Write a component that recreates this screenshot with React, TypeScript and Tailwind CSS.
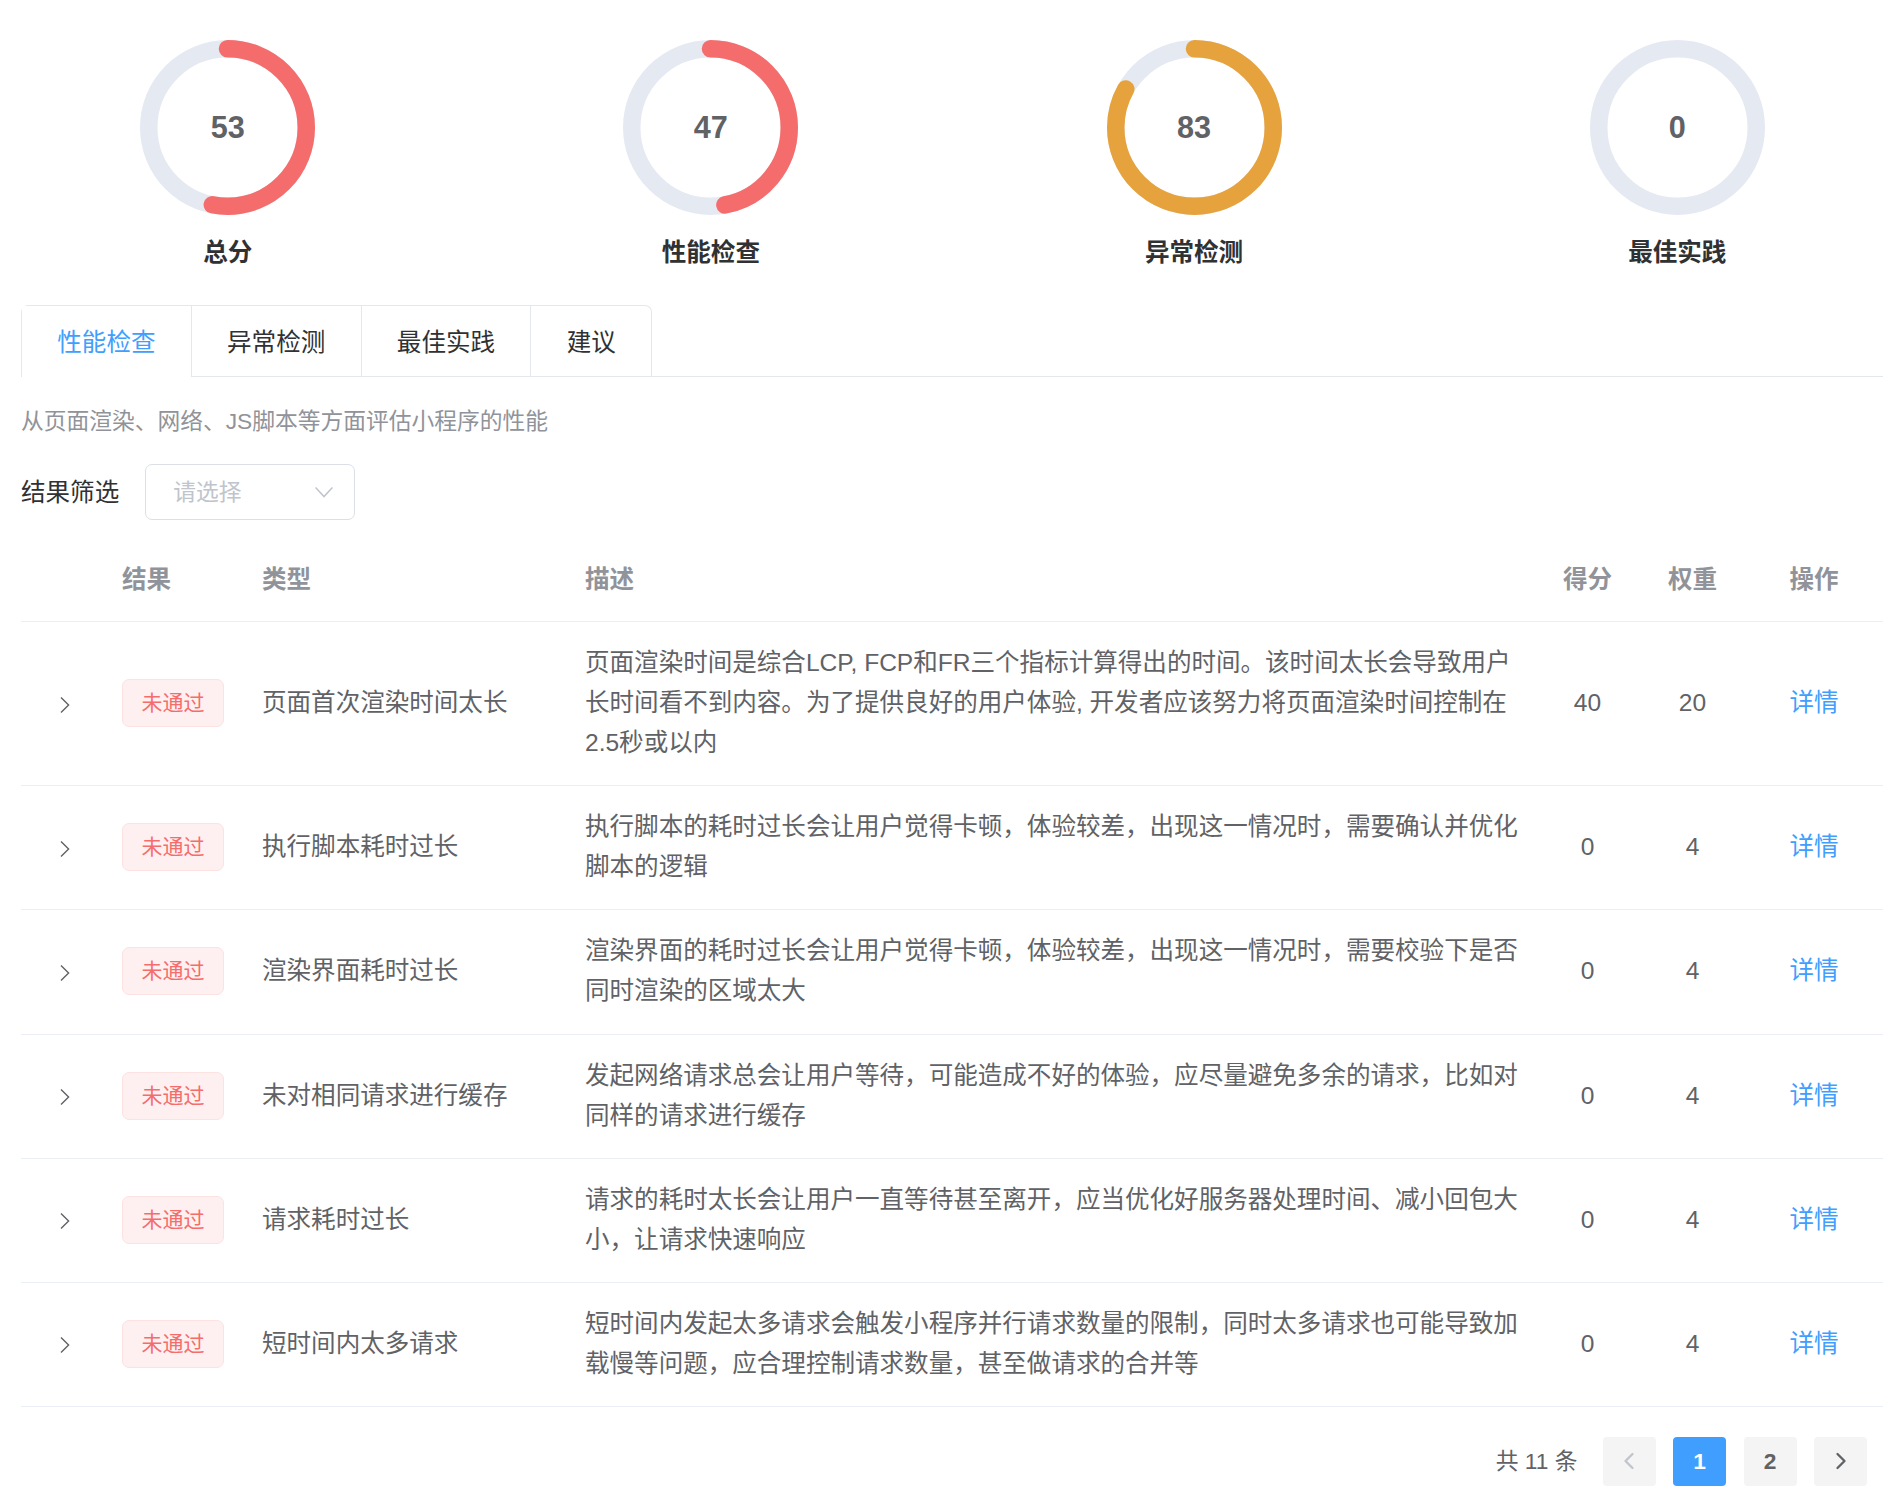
import { ChevronRight, ChevronLeft } from 'lucide-react';

const scores = [
  { label: '总分', value: 53, color: '#f56c6c' },
  { label: '性能检查', value: 47, color: '#f56c6c' },
  { label: '异常检测', value: 83, color: '#e6a23c' },
  { label: '最佳实践', value: 0, color: '#e5e9f2' },
];

const tabs = ['性能检查', '异常检测', '最佳实践', '建议'];

const rows = [
  {
    type: '页面首次渲染时间太长',
    desc: '页面渲染时间是综合LCP, FCP和FR三个指标计算得出的时间。该时间太长会导致用户长时间看不到内容。为了提供良好的用户体验, 开发者应该努力将页面渲染时间控制在2.5秒或以内',
    score: 40,
    weight: 20,
  },
  {
    type: '执行脚本耗时过长',
    desc: '执行脚本的耗时过长会让用户觉得卡顿，体验较差，出现这一情况时，需要确认并优化脚本的逻辑',
    score: 0,
    weight: 4,
  },
  {
    type: '渲染界面耗时过长',
    desc: '渲染界面的耗时过长会让用户觉得卡顿，体验较差，出现这一情况时，需要校验下是否同时渲染的区域太大',
    score: 0,
    weight: 4,
  },
  {
    type: '未对相同请求进行缓存',
    desc: '发起网络请求总会让用户等待，可能造成不好的体验，应尽量避免多余的请求，比如对同样的请求进行缓存',
    score: 0,
    weight: 4,
  },
  {
    type: '请求耗时过长',
    desc: '请求的耗时太长会让用户一直等待甚至离开，应当优化好服务器处理时间、减小回包大小，让请求快速响应',
    score: 0,
    weight: 4,
  },
  {
    type: '短时间内太多请求',
    desc: '短时间内发起太多请求会触发小程序并行请求数量的限制，同时太多请求也可能导致加载慢等问题，应合理控制请求数量，甚至做请求的合并等',
    score: 0,
    weight: 4,
  },
];

const gridCols = 'grid grid-cols-[83px_142px_323px_966px_105px_105px_138px] items-center';

function Ring({ value, color }: { value: number; color: string }) {
  const len = 2 * Math.PI * 45;
  const d = 'M50 5 a45 45 0 1 1 0 90 a45 45 0 1 1 0 -90';
  return (
    <div className="relative w-[175px] h-[175px]">
      <svg viewBox="0 0 100 100" className="w-full h-full">
        <path d={d} fill="none" stroke="#e5e9f2" strokeWidth="10" />
        {value > 0 && (
          <path
            d={d}
            fill="none"
            stroke={color}
            strokeWidth="10"
            strokeLinecap="round"
            strokeDasharray={`${(len * value) / 100} ${len}`}
          />
        )}
      </svg>
      <div className="absolute inset-0 pb-[2px] flex items-center justify-center text-[30.6px] font-bold text-[#606266]">
        {value}
      </div>
    </div>
  );
}

export default function App() {
  return (
    <div className="min-h-[1499px] bg-white overflow-hidden font-['Liberation_Sans','Noto_Sans_CJK_SC',sans-serif] text-[24.56px] leading-[40px] text-[#606266]">
      <div className="flex gap-[308.2px] pl-[140.2px] pt-[40px]">
        {scores.map((s) => (
          <div key={s.label} className="flex flex-col items-center w-[175px]">
            <Ring value={s.value} color={s.color} />
            <div className="mt-[17px] pt-[1px] h-[40px] font-bold text-[#303133]">{s.label}</div>
          </div>
        ))}
      </div>

      <div className="ml-[21px] mr-[13px]">
        <div className="mt-[33px] h-[72px] flex border-b border-[#e4e7ed]">
          <div className="flex h-[72px] border border-b-0 border-[#e4e7ed] rounded-t-[7px]">
            {tabs.map((t, i) => (
              <div
                key={t}
                className={`px-[35.3px] pt-[2px] flex items-center ${i > 0 ? 'border-l border-[#e4e7ed]' : ''} ${
                  i === 0 ? 'text-[#409eff] bg-white' : 'text-[#303133]'
                }`}
              >
                {t}
              </div>
            ))}
          </div>
        </div>

        <p className="mt-[24px] text-[22.75px] text-[#909399]">从页面渲染、网络、JS脚本等方面评估小程序的性能</p>

        <div className="mt-[23px] flex items-center h-[56px]">
          <span className="pt-[1px] text-[#303133]">结果筛选</span>
          <div className="ml-[26px] w-[210px] h-[56px] border border-[#dcdfe6] rounded-[7px] flex items-center justify-between pl-[27px] pr-[21px]">
            <span className="text-[22.75px] text-[#c0c4cc]">请选择</span>
            <svg width="18" height="11" viewBox="0 0 18 11" fill="none" stroke="#c0c4cc" strokeWidth="1.5">
              <path d="M0.6 0.6 L9 9.6 L17.4 0.6" />
            </svg>
          </div>
        </div>

        <div className={`${gridCols} mt-[16px] pt-[2px] h-[86px] border-b border-[#ebeef5] font-bold text-[#909399]`}>
          <div />
          <div className="pl-[18px]">结果</div>
          <div className="pl-[16px]">类型</div>
          <div className="pl-[16px]">描述</div>
          <div className="text-center">得分</div>
          <div className="text-center">权重</div>
          <div className="text-center">操作</div>
        </div>

        {rows.map((r) => (
          <div key={r.type} className={`${gridCols} pt-[21px] pb-[22.2px] border-b border-[#ebeef5]`}>
            <div className="flex justify-center pt-[3px] pl-[4px]">
              <svg width="10" height="18" viewBox="0 0 10 18" fill="none" stroke="#606266" strokeWidth="1.4">
                <path d="M1 1.5 L8.6 9 L1 16.5" />
              </svg>
            </div>
            <div className="pl-[18px]">
              <span className="flex items-center justify-center w-[102px] h-[48px] rounded-[7px] border border-[#fde2e2] bg-[#fef0f0] text-[21px] text-[#f56c6c]">
                未通过
              </span>
            </div>
            <div className="pl-[16px]">{r.type}</div>
            <div className="pl-[16px] pr-[12px]">{r.desc}</div>
            <div className="text-center">{r.score}</div>
            <div className="text-center">{r.weight}</div>
            <div className="text-center text-[#409eff]">详情</div>
          </div>
        ))}

        <div className="mt-[29.5px] mr-[16px] flex items-center justify-end text-[22.75px]">
          <span className="mr-[25px]">共 11 条</span>
          <div className="flex gap-[17.5px] font-bold">
            <button className="w-[53px] h-[49px] rounded-[4px] bg-[#f4f4f5] text-[#c0c4cc] flex items-center justify-center">
              <ChevronLeft className="w-[28px] h-[28px]" strokeWidth={2} />
            </button>
            <button className="w-[53px] h-[49px] rounded-[4px] bg-[#409eff] text-white flex items-center justify-center">1</button>
            <button className="w-[53px] h-[49px] rounded-[4px] bg-[#f4f4f5] flex items-center justify-center">2</button>
            <button className="w-[53px] h-[49px] rounded-[4px] bg-[#f4f4f5] flex items-center justify-center">
              <ChevronRight className="w-[28px] h-[28px]" strokeWidth={2} />
            </button>
          </div>
        </div>
      </div>
    </div>
  );
}
